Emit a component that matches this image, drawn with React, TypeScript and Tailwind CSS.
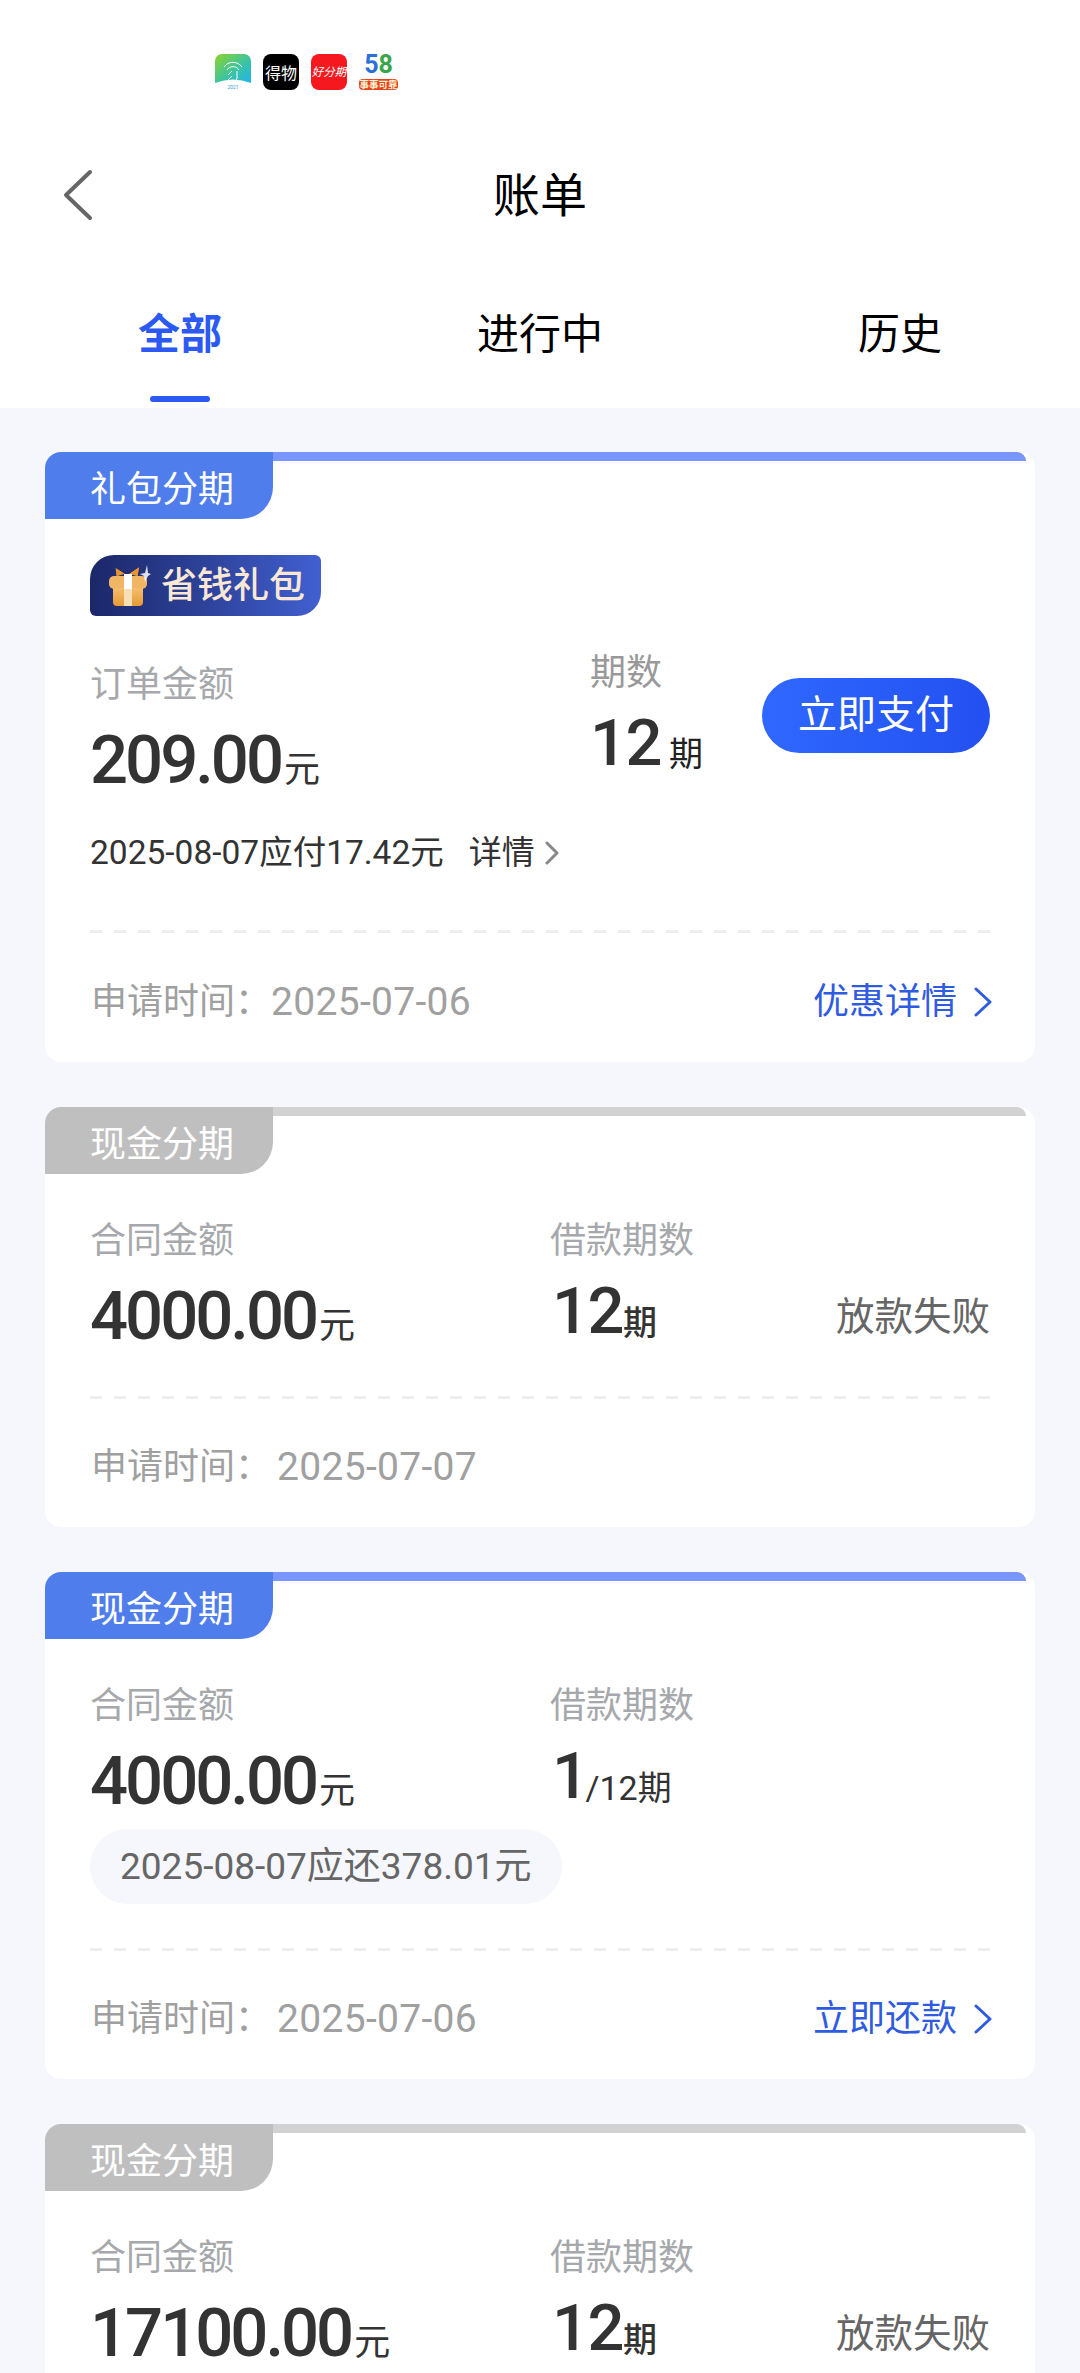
import React from "react";

const cjk = "font-['Roboto','Noto_Sans_CJK_SC',sans-serif]";

const Chevron = ({ color, w = 14, h = 26, sw = 3 }: { color: string; w?: number; h?: number; sw?: number }) => (
  <svg width={w} height={h} viewBox={`0 0 ${w} ${h}`} fill="none" className="shrink-0">
    <polyline
      points={`2,2 ${w - 2},${h / 2} 2,${h - 2}`}
      stroke={color}
      strokeWidth={sw}
      strokeLinecap="round"
      strokeLinejoin="round"
    />
  </svg>
);

const AppLogos = () => (
  <div className="flex h-[36px] items-center gap-[12px] pl-[215px]">
    <svg width="36" height="36" viewBox="0 0 36 36">
      <defs>
        <linearGradient id="lg1" x1="0" y1="0" x2="1" y2="1">
          <stop offset="0" stopColor="#8fd32a" />
          <stop offset="0.55" stopColor="#3cc4a0" />
          <stop offset="1" stopColor="#1fb4ef" />
        </linearGradient>
      </defs>
      <path d="M0 7a7 7 0 0 1 7-7h22a7 7 0 0 1 7 7v22q-18-7-36 0z" fill="url(#lg1)" />
      <path d="M9 13a11 11 0 0 1 18 0M12 16a7 7 0 0 1 12 0" stroke="#fff" strokeWidth="1" fill="none" />
      <path d="M17 17l-4 4M22 17v8l-2 2M17 22l-4 4" stroke="#fff" strokeWidth="1" fill="none" />
      <text x="18" y="35" fontSize="5" fill="#3a9fd8" textAnchor="middle" fontFamily="Roboto, sans-serif">
        2021
      </text>
    </svg>
    <div className="flex h-[36px] w-[36px] items-center justify-center rounded-[8px] bg-black font-['Noto_Sans_CJK_SC',sans-serif] text-[16px] leading-none text-white">
      得物
    </div>
    <div className="flex h-[36px] w-[36px] items-center justify-center rounded-[8px] bg-[#f5191f] font-['Noto_Sans_CJK_SC',sans-serif] text-[11.5px] leading-none whitespace-nowrap text-white italic">
      好分期
    </div>
    <div className="flex w-[39px] flex-col items-center leading-none">
      <div className="font-['Roboto',sans-serif] text-[25px] leading-[22px] font-bold">
        <span className="text-[#2a6fdc]">5</span>
        <span className="text-[#3aa64a]">8</span>
      </div>
      <div className="mt-[3px] rounded-[4px] bg-[#e8401c] font-['Noto_Sans_CJK_SC',sans-serif] text-[9.5px] leading-[11px] font-bold whitespace-nowrap text-[#fff3d0]">
        事事可靠
      </div>
    </div>
  </div>
);

const GiftIcon = () => (
  <svg width="42" height="41" viewBox="0 0 42 41" className="shrink-0">
    <defs>
      <linearGradient id="gift" x1="0" y1="0" x2="0" y2="1">
        <stop offset="0" stopColor="#f3bd6e" />
        <stop offset="1" stopColor="#e89a35" />
      </linearGradient>
    </defs>
    <path d="M7 12L6 2l11 7zM29 12l2-11-12 8z" fill="#e9952f" stroke="#1c2a6e" strokeWidth="1" />
    <rect x="0" y="11" width="38" height="13" rx="5" fill="#f1b566" />
    <path d="M4 23h30v14a4 4 0 0 1-4 4H8a4 4 0 0 1-4-4z" fill="url(#gift)" />
    <rect x="15" y="9" width="8" height="15" fill="#fff" />
    <rect x="15" y="24" width="8" height="17" fill="#f8dfb5" />
    <path d="M38 0l1 8 3 1-3 2-3 6-1-6-4-2 5-1z" fill="#fff" opacity="0.85" />
  </svg>
);

const CardShell = ({
  tag,
  active,
  children,
}: {
  tag: string;
  active: boolean;
  children: React.ReactNode;
}) => (
  <div className="rounded-[16px] bg-white">
    <div className="flex items-start pr-[9px]">
      <div
        className={`flex h-[67px] w-[228px] shrink-0 items-center rounded-tl-[16px] rounded-br-[32px] pt-[8px] pl-[45px] text-[36px] leading-none text-white ${
          active ? "bg-[#4f7deb]" : "bg-[#bfbfbf]"
        }`}
      >
        {tag}
      </div>
      <div className={`h-[9px] flex-1 rounded-tr-[10px] ${active ? "bg-[#7896fb]" : "bg-[#d2d2d2]"}`} />
    </div>
    <div className="px-[45px]">{children}</div>
  </div>
);

const Label = ({ children, color = "text-[#a6a8ac]" }: { children: React.ReactNode; color?: string }) => (
  <div className={`h-[40px] text-[36px] leading-[44px] whitespace-nowrap ${color}`}>{children}</div>
);

const Amount = ({ value }: { value: string }) => (
  <div className="mt-[21px] flex h-[72px] items-end whitespace-nowrap text-[#333]">
    <span className="font-['Roboto',sans-serif] text-[67px] leading-[72px] font-medium tracking-[-3px]">{value}</span>
    <span className="mb-[6px] ml-[3px] text-[36px] leading-[40px]">元</span>
  </div>
);

const Dashed = () => (
  <div className="h-[3px] bg-[repeating-linear-gradient(90deg,#eeeeee_0px,#eeeeee_12px,transparent_12px,transparent_24px)]" />
);

const Footer = ({ gap, date, action }: { gap: string; date: string; action?: string }) => (
  <div className="flex h-[40px] items-center justify-between text-[36px] leading-[43px]">
    <div className="flex items-center pl-[1px] whitespace-nowrap text-[#a0a0a0]">
      <span className={gap}>申请时间：</span>
      <span className="text-[39px] tracking-[0.3px]">{date}</span>
    </div>
    {action && (
      <div className="-mr-[2px] flex items-center text-[#2f5be0]">
        <span>{action}</span>
        <span className="ml-[17px]">
          <Chevron color="#2f5be0" w={18} h={30} />
        </span>
      </div>
    )}
  </div>
);

const ContractRow = ({
  amount,
  periods,
  status,
}: {
  amount: string;
  periods: React.ReactNode;
  status?: string;
}) => (
  <div className="flex pt-[45px]">
    <div className="w-[460px] shrink-0">
      <Label>合同金额</Label>
      <Amount value={amount} />
    </div>
    <div className="flex-1">
      <Label>借款期数</Label>
      <div className="mt-[16px] flex h-[72px] items-end pl-[2px] whitespace-nowrap text-[#333]">{periods}</div>
    </div>
    {status && <div className="mt-[76px] text-[38.5px] leading-[44px] whitespace-nowrap text-[#666]">{status}</div>}
  </div>
);

const Num = ({ children }: { children: React.ReactNode }) => (
  <span className="font-['Roboto',sans-serif] text-[65px] leading-[72px] font-medium tracking-[-1.5px]">{children}</span>
);

const Twelve = () => (
  <>
    <Num>12</Num>
    <span className="mb-[4px] text-[34px] leading-[40px] font-medium">期</span>
  </>
);

export default function App() {
  return (
    <div className={`h-[2373px] w-[1080px] overflow-hidden bg-[#f5f7fc] ${cjk}`}>
      <div className="h-[408px] bg-white pt-[54px]">
        <AppLogos />
        <div className="relative mt-[75px] flex h-[60px] items-center justify-center text-[47px] leading-none text-black">
          <svg width="32" height="54" viewBox="0 0 32 54" fill="none" className="absolute top-[3px] left-[62px]">
            <polyline
              points="28,4 4,27 28,50"
              stroke="#666"
              strokeWidth="4"
              strokeLinecap="round"
              strokeLinejoin="round"
            />
          </svg>
          账单
        </div>
        <div className="mt-[84px] grid grid-cols-3 text-center text-[42px] leading-[52px]">
          <div className="flex flex-col items-center">
            <span className="font-bold text-[#2b59f2]">全部</span>
            <span className="mt-[35px] h-[6px] w-[60px] rounded-full bg-[#2b59f2]" />
          </div>
          <div className="text-black">进行中</div>
          <div className="text-black">历史</div>
        </div>
      </div>

      <div className="flex flex-col gap-[45px] pt-[44px] pr-[45px] pl-[45px]">
        <CardShell tag="礼包分期" active>
          <div className="pt-[36px] pb-[40px]">
            <div className="flex h-[61px] w-[231px] items-center rounded-tl-[24px] rounded-tr-[6px] rounded-br-[24px] rounded-bl-[6px] bg-gradient-to-r from-[#1b2768] to-[#4160d0] pl-[19px]">
              <GiftIcon />
              <span className="ml-[10px] text-[36px] leading-none font-medium whitespace-nowrap text-[#fbe8d4]">
                省钱礼包
              </span>
            </div>
            <div className="mt-[35px] flex">
              <div className="w-[500px] shrink-0 pt-[12px]">
                <Label>订单金额</Label>
                <Amount value="209.00" />
              </div>
              <div className="w-[172px] shrink-0">
                <Label color="text-[#999]">期数</Label>
                <div className="mt-[16px] flex h-[72px] items-end whitespace-nowrap text-[#333]">
                  <span className="font-['Roboto',sans-serif] text-[65px] leading-[72px] font-medium tracking-[-1.5px]">
                    12
                  </span>
                  <span className="mb-[5px] ml-[8px] text-[34px] leading-[40px] text-[#222]">期</span>
                </div>
              </div>
              <div className="mt-[27px] flex h-[75px] w-[228px] shrink-0 items-center justify-center rounded-full bg-gradient-to-r from-[#2f68ff] to-[#2350f0] text-[39px] leading-none whitespace-nowrap text-white">
                立即支付
              </div>
            </div>
            <div className="mt-[37px] flex h-[40px] items-center text-[33.5px] leading-[40px] whitespace-nowrap text-[#333]">
              <span>2025-08-07应付17.42元</span>
              <span className="ml-[25px] text-[33px]">详情</span>
              <span className="ml-[10px]">
                <Chevron color="#888" w={14} h={24} />
              </span>
            </div>
            <div className="mt-[57px]">
              <Dashed />
            </div>
            <div className="mt-[49px]">
              <Footer gap="" date="2025-07-06" action="优惠详情" />
            </div>
          </div>
        </CardShell>

        <CardShell tag="现金分期" active={false}>
          <div className="pb-[40px]">
            <ContractRow amount="4000.00" periods={<Twelve />} status="放款失败" />
            <div className="mt-[44px]">
              <Dashed />
            </div>
            <div className="mt-[48px]">
              <Footer gap="mr-[6px]" date="2025-07-07" />
            </div>
          </div>
        </CardShell>

        <CardShell tag="现金分期" active>
          <div className="pb-[40px]">
            <ContractRow
              amount="4000.00"
              periods={
                <>
                  <Num>1</Num>
                  <span className="mb-[4px] -ml-[2px] text-[34px] leading-[40px]">/12期</span>
                </>
              }
            />
            <div className="mt-[12px] flex h-[75px] w-[472px] items-center rounded-full bg-[#f5f7fc] pl-[30px] text-[37px] leading-none whitespace-nowrap text-[#666]">
              2025-08-07应还378.01元
            </div>
            <div className="mt-[44px]">
              <Dashed />
            </div>
            <div className="mt-[48px]">
              <Footer gap="mr-[6px]" date="2025-07-06" action="立即还款" />
            </div>
          </div>
        </CardShell>

        <CardShell tag="现金分期" active={false}>
          <div className="pb-[41px]">
            <ContractRow amount="17100.00" periods={<Twelve />} status="放款失败" />
          </div>
        </CardShell>
      </div>
    </div>
  );
}
